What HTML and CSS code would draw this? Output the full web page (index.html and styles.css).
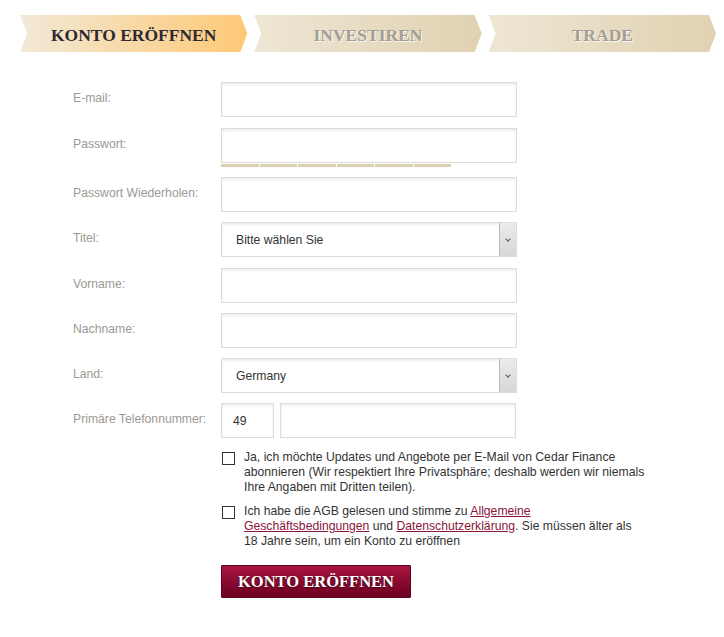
FILE: index.html
```html
<!DOCTYPE html>
<html lang="de">
<head>
  <meta charset="UTF-8" />
  <meta name="viewport" content="width=device-width, initial-scale=1" />
  <title>Konto eröffnen</title>
  <link rel="stylesheet" href="styles.css">
</head>
<body>
  <!-- Step indicator -->
  <ol class="steps">
    <li class="step active"><span>KONTO ERÖFFNEN</span></li>
    <li class="step"><span>INVESTIREN</span></li>
    <li class="step"><span>TRADE</span></li>
  </ol>

  <!-- Registration form -->
  <form class="signup">
    <div class="row row-wide">
      <label class="label">E-mail:</label>
      <input class="field" type="text" />
    </div>
    <div class="row row-pass">
      <label class="label">Passwort:</label>
      <div class="field-wrap">
        <input class="field" type="password" />
        <div class="strength">
          <i></i><i></i><i></i><i></i><i></i><i></i>
        </div>
      </div>
    </div>
    <div class="row">
      <label class="label">Passwort Wiederholen:</label>
      <input class="field" type="password" />
    </div>
    <div class="row row-wide">
      <label class="label">Titel:</label>
      <span class="select">
        <select class="field">
          <option>Bitte wählen Sie</option>
        </select>
      </span>
    </div>
    <div class="row">
      <label class="label">Vorname:</label>
      <input class="field" type="text" />
    </div>
    <div class="row">
      <label class="label">Nachname:</label>
      <input class="field" type="text" />
    </div>
    <div class="row">
      <label class="label">Land:</label>
      <span class="select">
        <select class="field">
          <option>Germany</option>
        </select>
      </span>
    </div>
    <div class="row">
      <label class="label">Primäre Telefonnummer:</label>
      <div class="phone">
        <input class="field prefix" type="text" value="49" />
        <input class="field number" type="text" />
      </div>
    </div>

    <div class="checks">
      <label class="check">
        <input type="checkbox" />
        <span>Ja, ich möchte Updates und Angebote per E-Mail von Cedar Finance abonnieren (Wir respektiert Ihre Privatsphäre; deshalb werden wir niemals Ihre Angaben mit Dritten teilen).</span>
      </label>
      <label class="check">
        <input type="checkbox" />
        <span>Ich habe die AGB gelesen und stimme zu <a href="#">Allgemeine Geschäftsbedingungen</a> und <a href="#">Datenschutzerklärung</a>. Sie müssen älter als 18 Jahre sein, um ein Konto zu eröffnen</span>
      </label>
      <button class="submit" type="button">KONTO ERÖFFNEN</button>
    </div>
  </form>
</body>
</html>
```

FILE: styles.css
```css
/* Base */
html, body {
  margin: 0;
  padding: 0;
  background: #fff;
  font-family: Arial, 'Liberation Sans', sans-serif;
  font-size: 12.2px;
  color: #333;
}

/* Step indicator (chevron tabs) */
.steps {
  list-style: none;
  margin: 0;
  padding: 15px 8px 0 20px;
  display: flex;
  gap: 7px;
}
.step {
  flex: 1;
  height: 37px;
  box-sizing: border-box;
  padding-top: 3px;
  display: flex;
  align-items: center;
  justify-content: center;
  background: linear-gradient(to right, #eee6d4, #e0d2b1);
  clip-path: polygon(0 0, calc(100% - 7px) 0, 100% 50%, calc(100% - 7px) 100%, 0 100%, 7px 50%);
  font-family: 'Liberation Serif', 'DejaVu Serif', serif;
  font-weight: bold;
  font-size: 17.5px;
  color: #a39d94;
  text-shadow: 1px 1px 0 rgba(255,255,255,0.8);
}
.step.active {
  background: linear-gradient(to right, #f2e9d6, #fec976);
  color: #2d2a35;
  text-shadow: none;
}

/* Form layout */
.signup {
  padding: 30px 0 20px 73px;
}
.row {
  display: flex;
  align-items: center;
  margin-bottom: 10px;
}
.row-wide { margin-bottom: 11px; }
.row-pass {
  align-items: flex-start;
}
.label {
  width: 148px;
  flex: none;
  color: #9d9892;
  font-size: 12.2px;
  margin-top: -3px;
}
.row-pass .label {
  height: 35px;
  margin-top: -2px;
  display: flex;
  align-items: center;
}

.field {
  box-sizing: border-box;
  width: 296px;
  height: 35px;
  margin: 0;
  padding: 0 11px;
  border: 1px solid #dcdcdc;
  background: #fff;
  box-shadow: inset 0 2px 3px rgba(0,0,0,0.07);
  font-family: Arial, 'Liberation Sans', sans-serif;
  font-size: 12.2px;
  color: #333;
  outline: none;
}

/* Password strength meter */
.field-wrap { width: 296px; }
.strength {
  display: flex;
  gap: 1px;
  margin-top: 1px;
  width: 230px;
  height: 3px;
}
.strength i {
  flex: 1;
  background: #ddd0b2;
}

/* Select with arrow box */
.select {
  position: relative;
  display: inline-block;
}
.select select {
  appearance: none;
  -webkit-appearance: none;
  padding-left: 14px;
}
.select::after {
  content: "";
  position: absolute;
  top: 1px;
  right: 1px;
  bottom: 1px;
  width: 16px;
  border-left: 1px solid #b8b8b8;
  background: linear-gradient(#ececec, #d6d6d6);
  pointer-events: none;
}
.select::before {
  content: "";
  position: absolute;
  right: 7px;
  top: 15px;
  width: 3px;
  height: 3px;
  border-right: 1px solid #555;
  border-bottom: 1px solid #555;
  transform: rotate(45deg);
  z-index: 1;
  pointer-events: none;
}

/* Phone */
.phone {
  display: flex;
  gap: 6px;
}
.phone .prefix { width: 53px; }
.phone .number { width: 236px; }

/* Checkboxes */
.checks {
  margin: 12px 0 0 148px;
  width: 425px;
}
.check {
  display: flex;
  align-items: flex-start;
  line-height: 15px;
  margin-bottom: 9px;
}
.check input {
  appearance: none;
  -webkit-appearance: none;
  flex: none;
  width: 13px;
  height: 13px;
  margin: 2px 9px 0 1px;
  border: 1px solid #333;
  background: #fff;
}
.check a {
  color: #8a1538;
  text-decoration: underline;
}

/* Submit */
.submit {
  margin-top: 7px;
  width: 190px;
  height: 33px;
  border: 1px solid #5f001e;
  border-radius: 1px;
  background: linear-gradient(#a8153f, #6d0022);
  color: #fff;
  font-family: 'Liberation Serif', 'DejaVu Serif', serif;
  font-weight: bold;
  font-size: 16.5px;
  text-shadow: 0 1px 2px rgba(0,0,0,0.6);
  cursor: pointer;
}
```
